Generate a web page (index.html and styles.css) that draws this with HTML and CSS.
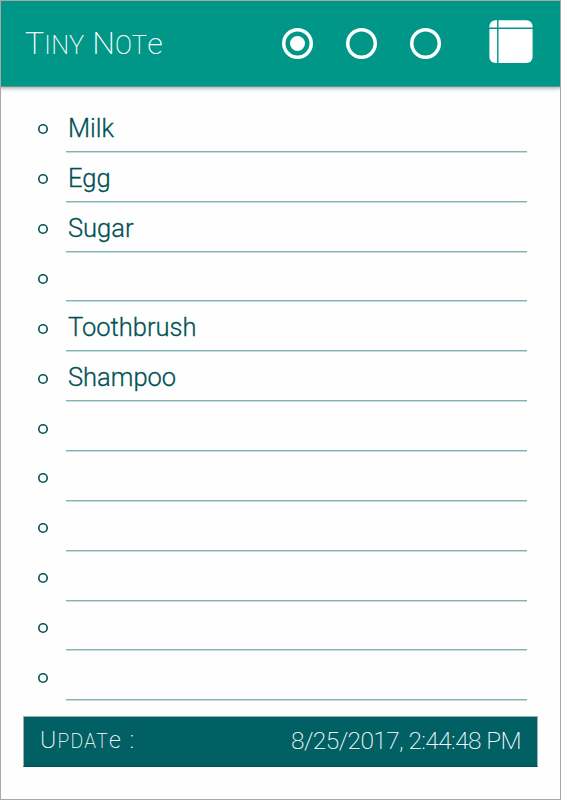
FILE: index.html
```
<!DOCTYPE html>
<html lang="en">
<head>
  <meta charset="UTF-8">
  <meta name="viewport" content="width=device-width, initial-scale=1.0">
  <title>Tiny Note</title>
  <link rel="stylesheet" href="styles.css">
</head>
<body>
  <header>
    <h1>T<span class="caps">iny</span> N<span class="caps">ot</span><span class="low">e</span></h1>
    <nav>
      <button class="page active" aria-label="Note 1"></button>
      <button class="page" aria-label="Note 2"></button>
      <button class="page" aria-label="Note 3"></button>
    </nav>
    <svg class="layout" width="44" height="44" viewBox="0 0 44 44">
      <rect x=".4" y=".3" width="43.2" height="42.8" rx="6" fill="#fff"/>
      <path d="M8.8 0v44M0 8.3h44" stroke="#009688" stroke-width="1.4"/>
    </svg>
  </header>

  <ul class="note">
    <li><span class="text">Milk</span></li>
    <li><span class="text">Egg</span></li>
    <li><span class="text">Sugar</span></li>
    <li><span class="text"></span></li>
    <li><span class="text">Toothbrush</span></li>
    <li><span class="text">Shampoo</span></li>
    <li><span class="text"></span></li>
    <li><span class="text"></span></li>
    <li><span class="text"></span></li>
    <li><span class="text"></span></li>
    <li><span class="text"></span></li>
    <li><span class="text"></span></li>
  </ul>

  <footer>
    <span class="label">U<span class="caps">pdat</span><span class="low">e</span> :</span>
    <span class="time">8/25/2017, 2:44:48 PM</span>
  </footer>
</body>
</html>
```
FILE: styles.css
```
*, *::before, *::after { box-sizing: border-box; }
body { margin: 0; height: 800px; background: #fefefe; border: 1px solid #a8a8a8; font-family: Roboto, sans-serif; color: #005255; overflow: hidden; }
header { display: flex; align-items: center; height: 87px; margin: -1px -1px 0; padding: 0 27px 1px 24px; background: #009688; border: 1px solid #00695f; border-bottom: 1px solid #4d9d95; box-shadow: 0 1px 4px rgba(0, 0, 0, .4); }
h1 { flex: 1; margin: 0; padding-top: 2px; font: 200 32px/40px Roboto, sans-serif; letter-spacing: .2px; color: #fff; white-space: nowrap; }
.caps { font-size: .79em; text-transform: uppercase; }
.low { font-size: .95em; }
nav { display: flex; gap: 33px; margin-right: 48px; }
.page { display: flex; align-items: center; justify-content: center; width: 31px; height: 31px; padding: 0; background: none; border: 0; box-shadow: inset 0 0 0 3.5px #fff; border-radius: 50%; }
.active::after { content: ""; width: 15px; height: 15px; background: #fff; border-radius: 50%; }
.layout { display: block; margin-top: -3px; }

.note { margin: 15px 33px 0 37px; padding: 0; list-style: none; }
.note li { display: flex; align-items: center; height: 49.86px; }
.note li::before { content: ""; width: 10px; height: 10px; margin: 5px 18px 0 0; box-shadow: inset 0 0 0 1.6px #005255; border-radius: 50%; }
.text { flex: 1; height: 100%; padding-left: 2px; border-bottom: 1px solid #80b3b3; box-shadow: 0 1px #c5dddd; font-size: 25.5px; font-weight: 300; -webkit-text-stroke: .3px #005255; line-height: 53px; }

footer { display: flex; align-items: center; justify-content: space-between; height: 51px; margin: 16px 22px 0; padding: 0 16px 2px; background: #006064; border: 1px solid #a0b0b0; border-bottom-color: #004b50; font: 200 24.5px/30px Roboto, sans-serif; color: #fff; }
.label { letter-spacing: 1.3px; }
.time { letter-spacing: -.6px; }
```
